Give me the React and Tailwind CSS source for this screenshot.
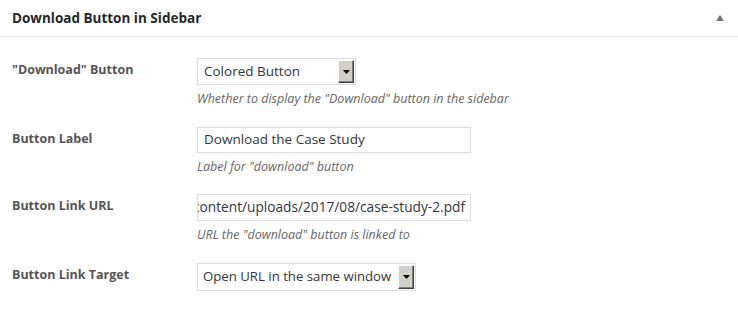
import React from 'react';

const font = { fontFamily: '"Open Sans", "Noto Sans", sans-serif' };

// old-style windows dropdown arrow button
const DropButton = () => (
  <div className="w-[16px] self-stretch my-[1px] mr-[1px] bg-[#d4d0c8] border border-t-white border-l-white border-r-[#404040] border-b-[#404040] shadow-[inset_-1px_-1px_0_#808080] flex items-center justify-center">
    <svg width="7" height="4" viewBox="0 0 7 4">
      <path d="M0 0h7L3.5 4z" fill="#000" />
    </svg>
  </div>
);

const Row = ({ label, children, help }) => (
  <div className="flex">
    <div className="w-[197px] pl-[12px] pt-[3px] text-[12.5px] font-bold text-[#555]">{label}</div>
    <div className="flex flex-col">
      {children}
      {help && <div className="mt-[6px] text-[12.5px] leading-[16px] italic text-[#666]">{help}</div>}
    </div>
  </div>
);

const App = () => {
  return (
    <div className="w-[738px] h-[313px] bg-white" style={font}>
      <div className="h-[37px] border-b border-[#eeeeee] flex items-center justify-between pl-[12px] pr-[14px]">
        <h2 className="text-[13.5px] font-bold text-[#23282d]">Download Button in Sidebar</h2>
        <svg width="8" height="6" viewBox="0 0 8 6">
          <path d="M4 0L8 6H0z" fill="#72777c" />
        </svg>
      </div>
      <div className="flex flex-col gap-[19.5px] pt-[21px]">
        <Row label={'"Download" Button'} help={'Whether to display the "Download" button in the sidebar'}>
          <div className="w-[159px] h-[27px] border border-[#dddddd] flex items-center">
            <div className="flex-1 pl-[6px] text-[13.5px] text-[#32373c]">Colored Button</div>
            <DropButton />
          </div>
        </Row>
        <Row label="Button Label" help={'Label for "download" button'}>
          <div className="w-[274px] h-[26px] border border-[#dddddd] flex items-center pl-[6px] text-[13.5px] text-[#32373c]">
            Download the Case Study
          </div>
        </Row>
        <Row label="Button Link URL" help={'URL the "download" button is linked to'}>
          <div className="w-[274px] h-[27px] border border-[#dddddd] flex items-center justify-end pr-[5px] overflow-hidden whitespace-nowrap text-[13.7px] text-[#32373c]">
            <span className="shrink-0">content/uploads/2017/08/case-study-2.pdf</span>
          </div>
        </Row>
        <Row label="Button Link Target">
          <div className="w-[219px] h-[28px] border border-[#dddddd] flex items-center">
            <div className="flex-1 pl-[5px] text-[13.2px] text-[#32373c] whitespace-nowrap">Open URL in the same window</div>
            <DropButton />
          </div>
        </Row>
      </div>
    </div>
  );
};

export default App;
